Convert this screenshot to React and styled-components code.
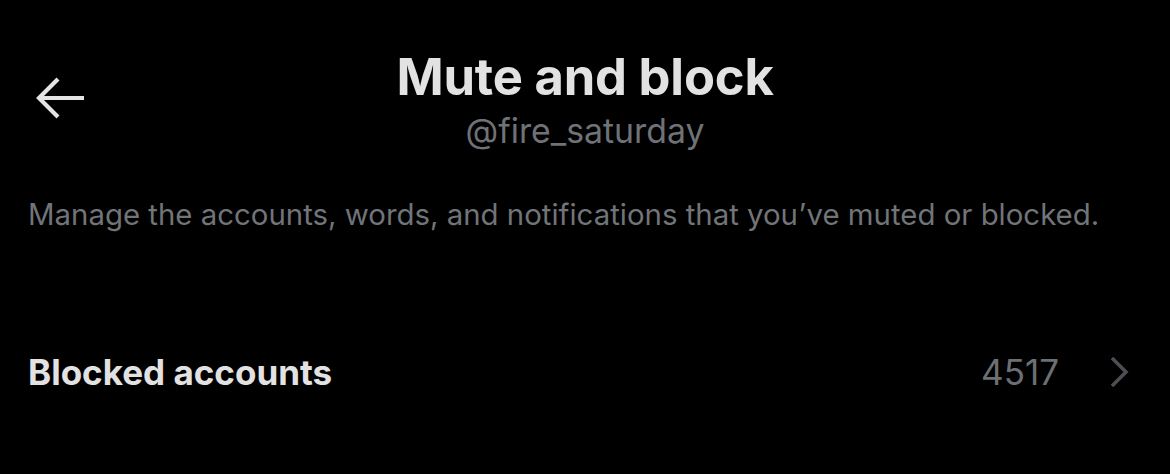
import React from 'react';
import styled, { createGlobalStyle } from 'styled-components';

const GlobalStyle = createGlobalStyle`
  html, body {
    margin: 0;
    padding: 0;
    background: #000;
  }
  body {
    font-family: Inter, "Liberation Sans", sans-serif;
    -webkit-font-smoothing: antialiased;
  }
`;

const Page = styled.div`
  width: 1170px;
  height: 474px;
  background: #000;
  color: #e7e7e7;
  overflow: hidden;
`;

const Header = styled.header`
  display: grid;
  grid-template-columns: 120px 1fr 120px;
  align-items: start;
  padding-top: 47px;
`;

const BackButton = styled.button`
  background: none;
  border: 0;
  padding: 0;
  margin: 28px 0 0 34px;
  width: 52px;
  height: 46px;
  display: flex;
  align-items: center;
  justify-content: center;
  color: #e7e7e7;
  cursor: pointer;
`;

const TitleBlock = styled.div`
  display: flex;
  flex-direction: column;
  align-items: center;
`;

const Title = styled.h1`
  margin: 0;
  font-size: 50.7px;
  font-weight: 700;
  line-height: 60px;
  letter-spacing: -0.2px;
  color: #e2e2e2;
`;

const Handle = styled.div`
  font-size: 33.8px;
  line-height: 44px;
  margin-top: 2px;
  color: #6f7276;
`;

const Description = styled.p`
  margin: 42px 0 0 28px;
  font-size: 29.4px;
  line-height: 40px;
  color: #717478;
`;

const Row = styled.div`
  display: flex;
  align-items: center;
  justify-content: space-between;
  margin-top: 116px;
  padding: 0 40px 0 28px;
`;

const RowLabel = styled.span`
  font-size: 35px;
  font-weight: 700;
  color: #e2e2e2;
`;

const RowRight = styled.span`
  display: flex;
  align-items: center;
  gap: 49px;
`;

const Count = styled.span`
  font-size: 35px;
  color: #6c6f73;
`;

const Chevron = () => (
  <svg width="22" height="34" viewBox="0 0 22 34" fill="none">
    <path d="M4 3 L18 17 L4 31" stroke="#4b4e52" strokeWidth="3.6" />
  </svg>
);

const BackArrow = () => (
  <svg width="52" height="46" viewBox="0 0 52 46" fill="none">
    <path d="M50 23 H6 M24 4 L5 23 L24 42" stroke="#e4e4e4" strokeWidth="4.2" />
  </svg>
);

export default function App() {
  return (
    <Page>
      <GlobalStyle />
      <Header>
        <BackButton aria-label="Back">
          <BackArrow />
        </BackButton>
        <TitleBlock>
          <Title>Mute and block</Title>
          <Handle>@fire_saturday</Handle>
        </TitleBlock>
        <div />
      </Header>
      <Description>
        Manage the accounts, words, and notifications that you’ve muted or blocked.
      </Description>
      <Row>
        <RowLabel>Blocked accounts</RowLabel>
        <RowRight>
          <Count>4517</Count>
          <Chevron />
        </RowRight>
      </Row>
    </Page>
  );
}
